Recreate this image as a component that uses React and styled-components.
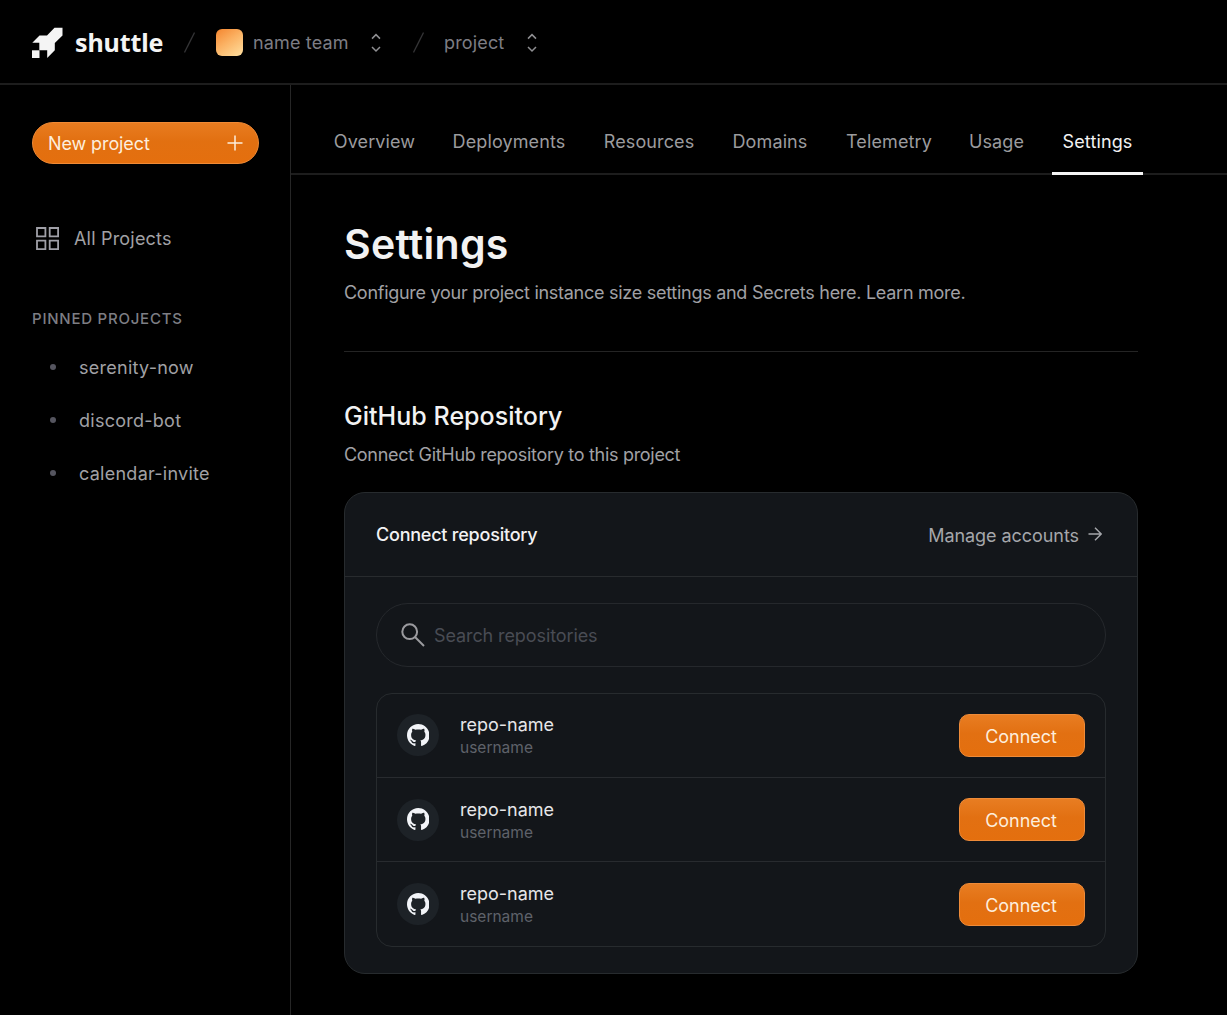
import React from 'react';
import styled, { createGlobalStyle } from 'styled-components';

const Global = createGlobalStyle`
  *, *::before, *::after { box-sizing: border-box; }
  body {
    margin: 0;
    background: #000;
    font-family: Inter, "Liberation Sans", sans-serif;
    font-size: 18px;
    color: #a1a1a5;
    overflow: hidden;
  }
  button, input { font: inherit; }
  h1, h2, h3, p, ul { margin: 0; padding: 0; }
`;

const Page = styled.div`
  display: flex;
  flex-direction: column;
  height: 1015px;
  background: #000;
`;

const Header = styled.header`
  display: flex;
  align-items: center;
  height: 85px;
  padding: 2px 0 0 32px;
  border-bottom: 2px solid #1d1d1d;
`;

const Logo = styled.a`
  display: flex;
  align-items: center;
  width: 152px;
  color: #f4f4f4;
`;

const Wordmark = styled.span`
  margin: -2px 0 0 12px;
  font-family: "Noto Sans", sans-serif;
  font-weight: 700;
  font-size: 25px;
  line-height: 30px;
  letter-spacing: ${(p) => p.$track}px;
`;

const Slash = styled.svg`
  flex: none;
  margin-right: ${(p) => p.$after}px;
`;

const Swatch = styled.span`
  width: 27px;
  height: 27px;
  margin-right: 10px;
  border-radius: 6px;
  background: linear-gradient(145deg, #f58a34 5%, #fbb162 45%, #ffe0a0 100%);
`;

const Crumb = styled.button`
  display: flex;
  align-items: center;
  width: ${(p) => p.$width}px;
  padding: 0;
  border: 0;
  background: none;
  color: #7d7d84;
  line-height: 24px;
  letter-spacing: ${(p) => p.$track}px;

  svg { margin-left: auto; color: #8f8f92; }
`;

const Body = styled.div`
  display: flex;
  flex: 1;
`;

const Sidebar = styled.aside`
  width: 291px;
  padding: 37px 31px 0 32px;
  border-right: 1px solid #262626;
`;

const NewProject = styled.button`
  display: flex;
  align-items: center;
  justify-content: space-between;
  width: 227px;
  height: 42px;
  padding: 0 15px;
  border: 1px solid #f08a35;
  border-radius: 21px;
  background: linear-gradient(180deg, #e87c20 0%, #e27011 45%, #e46f0e 100%);
  color: #fdeedd;
  letter-spacing: ${(p) => p.$track}px;
`;

const AllProjects = styled.a`
  display: flex;
  align-items: center;
  gap: 15px;
  margin-top: 62px;
  padding: 1px 0 0 4px;
  line-height: 24px;
  letter-spacing: ${(p) => p.$track}px;

  svg { margin-top: -2px; }
`;

const SectionLabel = styled.h3`
  margin-top: 58px;
  font-size: 15px;
  font-weight: 500;
  line-height: 20px;
  letter-spacing: ${(p) => p.$track}px;
  color: #7d7e84;
`;

const PinnedList = styled.ul`
  display: flex;
  flex-direction: column;
  gap: 29px;
  margin-top: 27px;
  list-style: none;
`;

const PinnedItem = styled.li`
  display: flex;
  align-items: center;
  gap: 23px;
  padding-left: 18px;
  line-height: 24px;
  letter-spacing: ${(p) => p.$track}px;
  white-space: nowrap;

  &::before {
    content: "";
    width: 6px;
    height: 6px;
    margin-top: -2px;
    border-radius: 50%;
    background: #55555f;
  }
`;

const Main = styled.main`
  flex: 1;
  min-width: 0;
`;

const Tabs = styled.nav`
  display: flex;
  align-items: flex-end;
  height: 90px;
  padding-left: 33px;
  border-bottom: 2px solid #1d1d1d;
`;

const Tab = styled.a`
  display: flex;
  justify-content: center;
  height: 58px;
  width: ${(p) => p.$width}px;
  margin-bottom: -2px;
  margin-right: ${(p) => p.$gap}px;
  padding-top: 13px;
  border-bottom: 3px solid ${(p) => (p.$active ? '#f4f4f4' : 'transparent')};
  color: ${(p) => (p.$active ? '#f2f2f2' : '#9b9b9e')};
  line-height: 24px;
  letter-spacing: ${(p) => p.$track}px;
  white-space: nowrap;
`;

const Content = styled.section`
  width: 847px;
  padding: 44px 0 0 53px;
`;

const Title = styled.h1`
  font-size: 41px;
  font-weight: 600;
  line-height: 50px;
  letter-spacing: ${(p) => p.$track}px;
  color: #f2f2f2;
`;

const Lead = styled.p`
  margin-top: ${(p) => p.$top}px;
  line-height: 24px;
  letter-spacing: ${(p) => p.$track}px;
  white-space: nowrap;
`;

const Rule = styled.hr`
  width: 794px;
  height: 1px;
  margin: 46px 0 0;
  border: 0;
  background: #242424;
`;

const Heading = styled.h2`
  margin-top: 48px;
  font-size: 25px;
  font-weight: 500;
  line-height: 32px;
  letter-spacing: ${(p) => p.$track}px;
  color: #f2f2f2;
`;

const Card = styled.section`
  width: 794px;
  height: 482px;
  margin-top: 25px;
  border: 1px solid #272b2e;
  border-radius: 21px;
  background: #13161a;
`;

const CardHeader = styled.header`
  display: flex;
  align-items: center;
  justify-content: space-between;
  height: 84px;
  padding: 0 35px 0 31px;
  border-bottom: 1px solid #282b2e;
`;

const CardTitle = styled.h3`
  font-size: 18px;
  font-weight: 500;
  letter-spacing: ${(p) => p.$track}px;
  color: #f2f2f4;
`;

const Manage = styled.a`
  display: flex;
  align-items: center;
  gap: 9px;
  padding-top: 1px;
  letter-spacing: ${(p) => p.$track}px;
  color: #a5a7ab;

  svg { margin-top: -2px; }
`;

const Search = styled.label`
  display: flex;
  align-items: center;
  gap: 9px;
  width: 730px;
  height: 64px;
  margin: 26px 0 0 31px;
  padding-left: 24px;
  border: 1px solid #25282c;
  border-radius: 32px;
  color: #9b9b9f;
`;

const SearchInput = styled.input`
  width: 600px;
  padding: 0;
  border: 0;
  outline: 0;
  background: none;
  letter-spacing: ${(p) => p.$track}px;
  color: #f2f2f4;

  &::placeholder { color: #494c54; opacity: 1; }
`;

const RepoList = styled.div`
  display: flex;
  flex-direction: column;
  width: 730px;
  height: 254px;
  margin: 26px 0 0 31px;
  border: 1px solid #272b2e;
  border-radius: 16px;
`;

const RepoRow = styled.div`
  display: flex;
  height: 83px;
  align-items: center;
  padding: 0 20px;

  & + & {
    height: 85px;
    border-top: 1px solid #282b2f;
  }
`;

const Avatar = styled.span`
  display: flex;
  align-items: center;
  justify-content: center;
  width: 42px;
  height: 42px;
  margin-right: 21px;
  border-radius: 50%;
  background: #1d2227;
  color: #f2f4f8;
`;

const RepoText = styled.div`
  display: flex;
  flex-direction: column;
  flex: 1;
  padding-top: 2px;
`;

const RepoName = styled.span`
  line-height: 24px;
  letter-spacing: ${(p) => p.$track}px;
  color: #e6e6e9;
`;

const UserName = styled.span`
  font-size: 15.5px;
  line-height: 22px;
  letter-spacing: ${(p) => p.$track}px;
  color: #5f626a;
`;

const ConnectButton = styled.button`
  width: 126px;
  height: 43px;
  padding: 2px 2px 0 0;
  border: 1px solid #ee8b39;
  border-radius: 10px;
  background: linear-gradient(180deg, #e87d22 0%, #e27012 45%, #e46f0e 100%);
  color: #fdeedd;
  letter-spacing: ${(p) => p.$track}px;
`;

const Rocket = () => (
  <svg width="31" height="31" viewBox="0 0 31 31" fill="currentColor">
    <path d="M22.5 0.7H30.5V8.4L22.8 16V23.3L15.2 31V23.3H7.3V15.8H0.3L7.5 8.5H15Z" />
    <path d="M0 23.3H7.5V31H0Z" />
  </svg>
);

const Sorter = () => (
  <svg width="12" height="20" viewBox="0 0 12 20" fill="none" stroke="currentColor" strokeWidth="1.5">
    <path d="M2 5.6L6 1.6L10 5.6M2 14L6 18L10 14" />
  </svg>
);

const Divider = ({ after }) => (
  <Slash $after={after} width="11" height="21" viewBox="0 0 11 21" stroke="#343436" strokeWidth="1.3">
    <path d="M0.5 20.5L10.5 0.5" />
  </Slash>
);

const GridIcon = () => (
  <svg width="23" height="23" viewBox="0 0 23 23" fill="none" stroke="#a0a0a8" strokeWidth="1.8">
    <path d="M1 1H9.4V9.4H1ZM13.7 1H22.1V9.4H13.7ZM1 13.7H9.4V22.1H1ZM13.7 13.7H22.1V22.1H13.7Z" />
  </svg>
);

const GitHubMark = () => (
  <svg width="22.5" height="22.5" viewBox="0 0 16 16" fill="currentColor">
    <path d="M8 0C3.58 0 0 3.58 0 8c0 3.54 2.29 6.53 5.47 7.59.4.07.55-.17.55-.38 0-.19-.01-.82-.01-1.49-2.01.37-2.53-.49-2.69-.94-.09-.23-.48-.94-.82-1.13-.28-.15-.68-.52-.01-.53.63-.01 1.08.58 1.23.82.72 1.21 1.87.87 2.33.66.07-.52.28-.87.51-1.07-1.78-.2-3.64-.89-3.64-3.95 0-.87.31-1.59.82-2.15-.08-.2-.36-1.02.08-2.12 0 0 .67-.21 2.2.82.64-.18 1.32-.27 2-.27s1.36.09 2 .27c1.53-1.04 2.2-.82 2.2-.82.44 1.1.16 1.92.08 2.12.51.56.82 1.27.82 2.15 0 3.07-1.87 3.75-3.65 3.95.29.25.54.73.54 1.48 0 1.07-.01 1.93-.01 2.2 0 .21.15.46.55.38A8.01 8.01 0 0 0 16 8c0-4.42-3.58-8-8-8z" />
  </svg>
);

const tabs = [
  { label: 'Overview', width: 101, gap: 18 },
  { label: 'Deployments', width: 132, gap: 18 },
  { label: 'Resources', width: 112, gap: 17 },
  { label: 'Domains', width: 96, gap: 18 },
  { label: 'Telemetry', width: 106, gap: 17 },
  { label: 'Usage', width: 75, gap: 18 },
  { label: 'Settings', width: 91, gap: 0, active: true },
];

const pinned = ['serenity-now', 'discord-bot', 'calendar-invite'];

export default function App() {
  return (
    <Page>
      <Global />
      <Header>
        <Logo>
          <Rocket />
          <Wordmark $track={-0.1}>shuttle</Wordmark>
        </Logo>
        <Divider after={21} />
        <Swatch />
        <Crumb $width={129} $track={0.15}>name team<Sorter /></Crumb>
        <Slash $after={0} width="31" height="1" />
        <Divider after={20} />
        <Crumb $width={94} $track={0.15}>project<Sorter /></Crumb>
      </Header>
      <Body>
        <Sidebar>
          <NewProject $track={-0.1}>
            New project
            <svg width="16" height="16" viewBox="0 0 16 16" stroke="currentColor" strokeWidth="1.5">
              <path d="M8 0.5V15.5M0.5 8H15.5" />
            </svg>
          </NewProject>
          <AllProjects $track={0.2}><GridIcon />All Projects</AllProjects>
          <SectionLabel $track={0.76}>PINNED PROJECTS</SectionLabel>
          <PinnedList>
            {pinned.map((name) => <PinnedItem key={name} $track={0.26}>{name}</PinnedItem>)}
          </PinnedList>
        </Sidebar>
        <Main>
          <Tabs>
            {tabs.map((t) => (
              <Tab key={t.label} $width={t.width} $gap={t.gap} $active={t.active} $track={0.12}>{t.label}</Tab>
            ))}
          </Tabs>
          <Content>
            <Title $track={0.25}>Settings</Title>
            <Lead $top={12} $track={-0.275}>Configure your project instance size settings and Secrets here. Learn more.</Lead>
            <Rule />
            <Heading $track={0.03}>GitHub Repository</Heading>
            <Lead $top={11} $track={-0.3}>Connect GitHub repository to this project</Lead>
            <Card>
              <CardHeader>
                <CardTitle $track={-0.22}>Connect repository</CardTitle>
                <Manage $track={-0.06}>
                  Manage accounts
                  <svg width="14" height="14" viewBox="0 0 14 14" fill="none" stroke="currentColor" strokeWidth="1.4">
                    <path d="M0.5 7H13M7 0.8L13.2 7L7 13.2" />
                  </svg>
                </Manage>
              </CardHeader>
              <Search>
                <svg width="24" height="24" viewBox="0 0 24 24" fill="none" stroke="currentColor" strokeWidth="2">
                  <circle cx="8.7" cy="8.7" r="7.4" />
                  <path d="M14 14L23 23" />
                </svg>
                <SearchInput $track={-0.1} placeholder="Search repositories" />
              </Search>
              <RepoList>
                {[0, 1, 2].map((i) => (
                  <RepoRow key={i}>
                    <Avatar><GitHubMark /></Avatar>
                    <RepoText>
                      <RepoName $track={0}>repo-name</RepoName>
                      <UserName $track={0}>username</UserName>
                    </RepoText>
                    <ConnectButton $track={-0.05}>Connect</ConnectButton>
                  </RepoRow>
                ))}
              </RepoList>
            </Card>
          </Content>
        </Main>
      </Body>
    </Page>
  );
}
